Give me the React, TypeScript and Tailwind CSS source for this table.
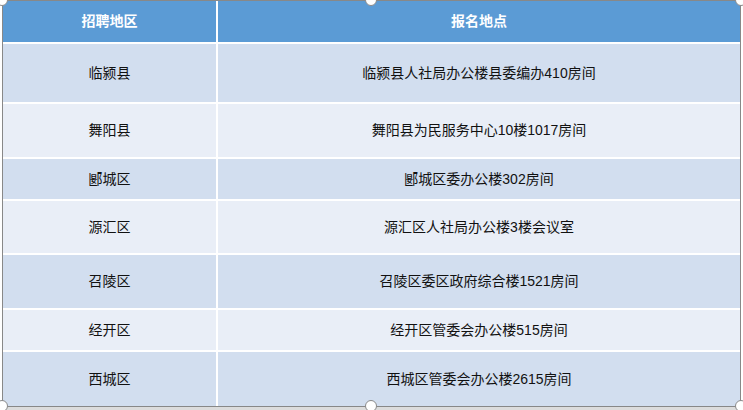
import { Fragment } from "react"

const rows = [
  { area: "临颍县", place: "临颍县人社局办公楼县委编办410房间", h: "h-[58px]", bg: "bg-[#d2deef]" },
  { area: "舞阳县", place: "舞阳县为民服务中心10楼1017房间", h: "h-[53px]", bg: "bg-[#e9eef7]" },
  { area: "郾城区", place: "郾城区委办公楼302房间", h: "h-[40px]", bg: "bg-[#d2deef]" },
  { area: "源汇区", place: "源汇区人社局办公楼3楼会议室", h: "h-[52px]", bg: "bg-[#e9eef7]" },
  { area: "召陵区", place: "召陵区委区政府综合楼1521房间", h: "h-[53px]", bg: "bg-[#d2deef]" },
  { area: "经开区", place: "经开区管委会办公楼515房间", h: "h-[40px]", bg: "bg-[#e9eef7]" },
  { area: "西城区", place: "西城区管委会办公楼2615房间", h: "h-[54px]", bg: "bg-[#d2deef]" },
]

// selection handles drawn over the image edges
const Handle = ({ className }: { className: string }) => (
  <div className={`absolute w-[12px] h-[12px] rounded-full bg-white border border-[#8a8a8a] ${className}`} />
)

export default function App() {
  return (
    <div
      className="relative w-[743px] h-[410px] overflow-hidden bg-white text-[14px]"
      style={{ fontFamily: '"Liberation Sans", "Noto Sans CJK SC", sans-serif' }}
    >
      <div className="ml-[2px] w-[739px] h-[407px] border border-[#888888] bg-white">
        <div className="grid grid-cols-[213px_522px] gap-[2px] bg-white">
          <div className="h-[41px] flex items-center justify-center bg-[#5b9bd5] text-white font-bold">招聘地区</div>
          <div className="h-[41px] flex items-center justify-center bg-[#5b9bd5] text-white font-bold">报名地点</div>
          {rows.map((r) => (
            <Fragment key={r.area}>
              <div className={`${r.h} ${r.bg} flex items-center justify-center text-[#111]`}>{r.area}</div>
              <div className={`${r.h} ${r.bg} flex items-center justify-center text-[#111]`}>{r.place}</div>
            </Fragment>
          ))}
        </div>
      </div>
      <div className="h-[3px] bg-[#dcdcdc]" />
      <Handle className="left-[-4px] top-[-6px]" />
      <Handle className="left-[365px] top-[-6px]" />
      <Handle className="left-[735px] top-[-6px]" />
      <Handle className="left-[-4px] top-[400px]" />
      <Handle className="left-[365px] top-[400px]" />
      <Handle className="left-[735px] top-[400px]" />
    </div>
  )
}
